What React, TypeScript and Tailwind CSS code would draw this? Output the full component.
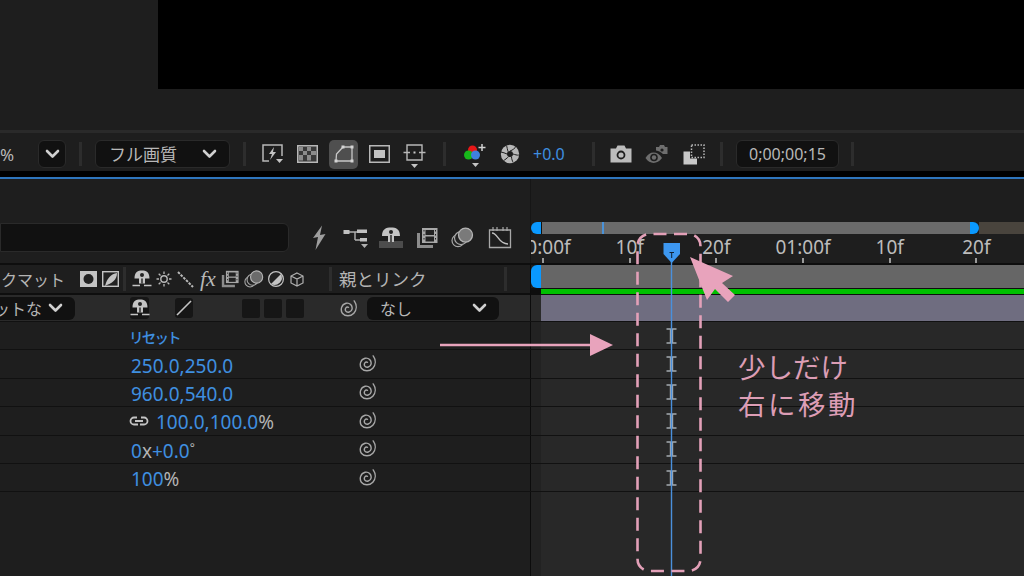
import React from "react";

const FONT = "font-['Noto_Sans','Noto_Sans_CJK_JP',sans-serif]";
const JP = "font-['Noto_Sans_CJK_JP',sans-serif]";

function Chevron({ className = "" }: { className?: string }) {
  return (
    <svg width="15" height="10" viewBox="0 0 15 10" className={className}>
      <path d="M2 2 L7.5 7.5 L13 2" fill="none" stroke="#d0d0d0" strokeWidth="2.6" strokeLinecap="round" strokeLinejoin="round" />
    </svg>
  );
}

function Sep({ className = "" }: { className?: string }) {
  return <div className={`w-[3px] h-[24px] bg-[#2d2d2d] shrink-0 ${className}`} />;
}

function Spiral({ className = "" }: { className?: string }) {
  return (
    <svg width="19" height="19" viewBox="0 0 16 16" className={`shrink-0 ${className}`}>
      <path d="M12.8 1.6 C15.2 5 15 9.2 12.5 12 C10 14.8 5 14.8 2.8 12 C1 9 2 4.6 6 3.6 C9 3 11.5 5.5 11 8.5 C10.5 11 7 12 5.6 10 C4.7 8 6.2 6.2 8 7" fill="none" stroke="#a8a8a8" strokeWidth="1.2" strokeLinecap="round" />
    </svg>
  );
}

function Shy({ className = "" }: { className?: string }) {
  return (
    <svg width="20" height="18" viewBox="0 0 20 18" className={`shrink-0 ${className}`}>
      <path d="M2.5 8.5 C2.5 2 6 0.5 10 0.5 C14 0.5 17.5 2 17.5 8.5 L13 8.5 L13 13.5 L7 13.5 L7 8.5 Z" fill="#c4c4c4" />
      <circle cx="10" cy="5" r="2" fill="#222" />
      <path d="M10 8.5 V13.5" stroke="#222" strokeWidth="1.4" />
      <path d="M0.5 15.5 H8 M12 15.5 H19.5" stroke="#c4c4c4" strokeWidth="1.5" />
    </svg>
  );
}

function FastPreview() {
  return (
    <svg width="24" height="22" viewBox="0 0 24 22" className="shrink-0">
      <path d="M8 18 H2 V2 H21 V13" fill="none" stroke="#b8b8b8" strokeWidth="1.5" />
      <path d="M13 4 L8 11 H11 L9 17 L15 9 H12 Z" fill="#c4c4c4" />
      <path d="M15 16 H22 L18.5 20 Z" fill="#c4c4c4" />
    </svg>
  );
}
function Checker() {
  return (
    <svg width="21" height="18" viewBox="0 0 21 18" className="shrink-0">
      <rect x="0.75" y="0.75" width="19.5" height="16.5" fill="#3a3a3a" stroke="#b8b8b8" strokeWidth="1.5" />
      <path d="M2 2 H6 V6 H2 Z M10 2 H14 V6 H10 Z M6 6 H10 V10 H6 Z M14 6 H19 V10 H14 Z M2 10 H6 V15.5 H2 Z M10 10 H14 V15.5 H10 Z" fill="#8c8c8c" />
    </svg>
  );
}
function MaskPath() {
  return (
    <svg width="22" height="20" viewBox="0 0 22 20">
      <path d="M3 17 L3.5 10 L10 3 H19 V17 Z" fill="none" stroke="#c8c8c8" strokeWidth="1.3" />
      <path d="M1.5 15.5 h3 v3 h-3 Z M17.5 15.5 h3 v3 h-3 Z M17.5 1.5 h3 v3 h-3 Z M8.5 1.5 h3 v3 h-3 Z" fill="#d4d4d4" />
    </svg>
  );
}
function Region() {
  return (
    <svg width="21" height="18" viewBox="0 0 21 18" className="shrink-0">
      <rect x="0.75" y="0.75" width="19.5" height="16.5" fill="none" stroke="#b8b8b8" strokeWidth="1.5" />
      <rect x="5" y="5" width="11" height="8" fill="#c4c4c4" />
    </svg>
  );
}
function Target() {
  return (
    <svg width="23" height="26" viewBox="0 0 23 26" className="shrink-0">
      <path d="M4 1 H19 V16 H4 Z" fill="none" stroke="#b8b8b8" strokeWidth="1.4" />
      <path d="M0.5 8.5 H7 M16 8.5 H22.5" stroke="#b8b8b8" strokeWidth="1.4" />
      <rect x="10.5" y="7.5" width="2" height="2" fill="#c8c8c8" />
      <path d="M8 20 H15 L11.5 24 Z" fill="#c4c4c4" />
    </svg>
  );
}
function Rgb() {
  return (
    <svg width="24" height="26" viewBox="0 0 24 26" className="shrink-0">
      <circle cx="9.5" cy="7" r="4.5" fill="#e81818" />
      <circle cx="5.5" cy="12" r="4.5" fill="#17b81a" />
      <circle cx="12.5" cy="12" r="4.5" fill="#3f7fe0" />
      <path d="M19 1 V8 M15.5 4.5 H22.5" stroke="#d0d0d0" strokeWidth="1.5" />
      <path d="M9 20 H16 L12.5 24 Z" fill="#c4c4c4" />
    </svg>
  );
}
function Shutter() {
  return (
    <svg width="20" height="20" viewBox="0 0 20 20" className="shrink-0">
      <circle cx="10" cy="10" r="9.2" fill="#b8b8b8" />
      <circle cx="10" cy="10" r="3" fill="#1e1e1e" />
      <path d="M10 7 C13 6 15 4 16 2.5 M13 10 C15 10.5 17 11.5 18.8 11 M11.5 12.7 C11.5 15 12.5 17 13 18.5 M8.5 12.7 C7 14 5 16 3.5 16.5 M7 10 C5 9 3 8.5 1 8 M8 7.5 C7.5 6 7 3 6.5 1.5" fill="none" stroke="#1e1e1e" strokeWidth="1" />
    </svg>
  );
}
function Camera() {
  return (
    <svg width="22" height="18" viewBox="0 0 22 18" className="shrink-0">
      <path d="M0.5 3.5 H6 L7.5 0.5 H14.5 L16 3.5 H21.5 V17.5 H0.5 Z" fill="#bcbcbc" />
      <circle cx="11" cy="10" r="4.4" fill="#1e1e1e" />
      <circle cx="11" cy="10" r="2.6" fill="#bcbcbc" />
    </svg>
  );
}
function EyeCam() {
  return (
    <svg width="23" height="21" viewBox="0 0 23 21" className="shrink-0">
      <path d="M0.5 14 C4 7.5 12 6 17 14 C12 20.5 5 20.5 0.5 14 Z" fill="#6e6e6e" />
      <circle cx="9" cy="13.5" r="3.8" fill="#1e1e1e" />
      <circle cx="9" cy="13.5" r="2.2" fill="#6e6e6e" />
      <path d="M11 3 H14 L15 1 H19 L20 3 H22.5 V10 H18 C16 8 14 7 11 6.5 Z" fill="#6e6e6e" />
      <circle cx="17" cy="6" r="1.6" fill="#1e1e1e" />
    </svg>
  );
}
function Snapshot() {
  return (
    <svg width="22" height="21" viewBox="0 0 22 21" className="shrink-0">
      <rect x="8.5" y="1" width="12.5" height="12.5" fill="none" stroke="#b8b8b8" strokeWidth="1.5" strokeDasharray="1.5 1.5" />
      <path d="M0.5 7.5 H7 V14.5 H14 V20.5 H0.5 Z" fill="#c8c8c8" />
    </svg>
  );
}
function Bolt() {
  return (
    <svg width="16" height="26" viewBox="0 0 16 26" className="shrink-0">
      <path d="M11 0.5 L2 13 L7 12 L4.5 25 L14.5 9 L9 10 Z" fill="#9e9e9e" />
    </svg>
  );
}
function Flow() {
  return (
    <svg width="26" height="24" viewBox="0 0 26 24" className="shrink-0">
      <path d="M4 6 H12 M12 6 V14 M12 6 H19 M12 14 H19" stroke="#b0b0b0" strokeWidth="1.4" fill="none" />
      <rect x="0.5" y="4" width="6" height="4" fill="#c0c0c0" />
      <rect x="14" y="3.5" width="10" height="3.5" fill="#c0c0c0" />
      <rect x="17" y="12" width="7" height="3.5" fill="#c0c0c0" />
      <path d="M18 18 H25 L21.5 22 Z" fill="#b0b0b0" />
    </svg>
  );
}
function HeadShy() {
  return (
    <svg width="24" height="22" viewBox="0 0 24 22" className="shrink-0">
      <rect x="0" y="14" width="24" height="7" fill="#4c4c4c" />
      <path d="M3 9 C3 2 7 0.5 12 0.5 C17 0.5 21 2 21 9 L15 9 L15 15 L9 15 L9 9 Z" fill="#c4c4c4" />
      <circle cx="12" cy="5" r="2" fill="#222" />
      <path d="M12 8 V15" stroke="#222" strokeWidth="1.4" />
    </svg>
  );
}
function Film({ w = 22, h = 22 }: { w?: number; h?: number }) {
  return (
    <svg width={w} height={h} viewBox="0 0 22 22" className="shrink-0">
      <path d="M1 6 H4 V18 H17 V21 H1 Z" fill="#8c8c8c" />
      <rect x="6" y="1" width="15.5" height="15" fill="#a8a8a8" />
      <rect x="9.5" y="3" width="8.5" height="5" fill="#222" />
      <rect x="9.5" y="9.5" width="8.5" height="5" fill="#222" />
      <path d="M7.5 3 h1 v1.5 h-1 Z M7.5 7 h1 v1.5 h-1 Z M7.5 11 h1 v1.5 h-1 Z M19 3 h1 v1.5 h-1 Z M19 7 h1 v1.5 h-1 Z M19 11 h1 v1.5 h-1 Z" fill="#222" />
    </svg>
  );
}
function Blur({ w = 23, fillTop = "#7a7a7a" }: { w?: number; fillTop?: string }) {
  return (
    <svg width={w} height={w * 0.92} viewBox="0 0 23 21" className="shrink-0">
      <circle cx="7" cy="13.5" r="6" fill="#222" stroke="#a8a8a8" strokeWidth="1.2" />
      <circle cx="10" cy="11" r="6.5" fill="#222" stroke="#a8a8a8" strokeWidth="1.2" />
      <circle cx="14.5" cy="8" r="7" fill={fillTop} stroke="#b4b4b4" strokeWidth="1.3" />
    </svg>
  );
}
function Graph() {
  return (
    <svg width="24" height="24" viewBox="0 0 24 24" className="shrink-0">
      <path d="M1.5 4 H22.5 V21.5 H1.5 Z" fill="none" stroke="#a8a8a8" strokeWidth="1.3" />
      <path d="M4 7 C10 7 10 18 20 18" fill="none" stroke="#c0c0c0" strokeWidth="1.4" />
      <path d="M5 1 V5 M9 1 V5 M15 1 V5 M19 1 V5" stroke="#a8a8a8" strokeWidth="1.2" />
    </svg>
  );
}
function Ibeam() {
  return (
    <svg width="11" height="16" viewBox="0 0 11 16" className="shrink-0">
      <path d="M0.5 1 H10.5 M0.5 15 H10.5" stroke="#a4aab0" strokeWidth="1.7" />
      <rect x="3.8" y="1" width="3.4" height="14" fill="#a4aab0" />
    </svg>
  );
}

function Row({ children, iBeam = false }: { children?: React.ReactNode; iBeam?: boolean }) {
  return (
    <div className="flex h-[28.4px] shrink-0 border-b border-[#111111]">
      <div className="w-[530px] shrink-0 flex items-center relative">{children}</div>
      <div className="w-px bg-[#0c0c0c] shrink-0" />
      <div className="w-[10px] bg-[#222222] shrink-0" />
      <div className="flex-1 bg-[#282828] flex items-center pl-[125px]">{iBeam && <Ibeam />}</div>
    </div>
  );
}

function ValueRow({ children }: { children: React.ReactNode }) {
  return (
    <Row iBeam>
      <div className={`w-[358px] pl-[131px] pt-[3px] shrink-0 text-[19px] leading-[24px] text-[#3f8fe0] flex items-center whitespace-nowrap ${FONT}`}>{children}</div>
      <Spiral className="mb-[1px]" />
    </Row>
  );
}

export default function App() {
  return (
    <div className={`relative w-[1024px] h-[576px] overflow-hidden bg-[#1e1e1e] flex flex-col ${FONT}`}>
      {/* viewer */}
      <div className="h-[130px] shrink-0">
        <div className="ml-[158px] h-[89px] bg-black" />
      </div>
      <div className="h-[3px] bg-[#2a2a2a] shrink-0" />
      {/* toolbar */}
      <div className="h-[38px] shrink-0 flex items-center whitespace-nowrap text-[#b8b8b8] pt-[4px]">
        <span className="w-[38px] shrink-0 text-[17px] leading-none">%</span>
        <div className="w-[28px] h-[28px] bg-[#111111] border border-[#2a2a2a] rounded-[6px] flex items-center justify-center shrink-0"><Chevron /></div>
        <Sep className="ml-[13px]" />
        <div className={`ml-[13px] w-[135px] h-[28px] bg-[#111111] border border-[#2a2a2a] rounded-[6px] flex items-center justify-between pl-[13px] pr-[12px] shrink-0 text-[17px] ${JP}`}>
          <span>フル画質</span>
          <Chevron />
        </div>
        <Sep className="ml-[13px]" />
        <div className="ml-[15px]"><FastPreview /></div>
        <div className="ml-[12px]"><Checker /></div>
        <div className="ml-[11px] w-[29px] h-[29px] rounded-[5px] bg-[#4f4f4f] flex items-center justify-center shrink-0"><MaskPath /></div>
        <div className="ml-[11px]"><Region /></div>
        <div className="ml-[13px] pt-[5px]"><Target /></div>
        <Sep className="ml-[17px]" />
        <div className="ml-[17px] pt-[4px]"><Rgb /></div>
        <div className="ml-[13px]"><Shutter /></div>
        <span className="ml-[13px] text-[16px] text-[#3f8fe0] w-[32px] shrink-0">+0.0</span>
        <Sep className="ml-[27px]" />
        <div className="ml-[15px]"><Camera /></div>
        <div className="ml-[13px]"><EyeCam /></div>
        <div className="ml-[15px]"><Snapshot /></div>
        <Sep className="ml-[15px]" />
        <div className="ml-[13px] w-[103px] h-[28px] bg-[#111111] border border-[#2a2a2a] rounded-[6px] flex items-center justify-center text-[16px] shrink-0">0;00;00;15</div>
        <Sep className="ml-[12px]" />
      </div>
      <div className="h-[6px] bg-black shrink-0" />
      <div className="h-[2px] bg-[#2f76bd] shrink-0" />

      {/* panel header + ruler */}
      <div className="flex h-[86px] shrink-0 border-b-2 border-[#0e0e0e]">
        <div className="w-[530px] shrink-0 flex items-start pt-[44px]">
          <div className="w-[289px] h-[29px] bg-[#111111] border border-[#2a2a2a] rounded-r-[6px] shrink-0" />
          <div className="flex items-center ml-[22px] h-[29px]">
            <Bolt />
            <div className="ml-[16px]"><Flow /></div>
            <div className="ml-[10px]"><HeadShy /></div>
            <div className="ml-[13px]"><Film /></div>
            <div className="ml-[13px]"><Blur /></div>
            <div className="ml-[14px]"><Graph /></div>
          </div>
        </div>
        <div className="w-px bg-[#161616] shrink-0" />
        <div className="flex-1 min-w-0 overflow-hidden pt-[43px] relative">
          <div className="flex h-[12px]">
            <div className="w-[10px] bg-[#0a99ff] rounded-l-[6px] shrink-0" />
            <div className="w-[429px] bg-[#6b6b6b] relative shrink-0 border-l border-[#111111]">
              <div className="absolute left-[60px] top-0 bottom-0 w-[2px] bg-[#4a92d8]" />
            </div>
            <div className="w-[9px] bg-[#0a99ff] rounded-r-[6px] shrink-0" />
            <div className="flex-1 bg-[#49443d]" />
          </div>
          <div className="flex ml-[-31.3px] h-[27px] mt-[2px]">
            {["00:00f", "10f", "20f", "01:00f", "10f", "20f"].map((t, i) => (
              <div key={i} className="w-[86.67px] shrink-0 flex flex-col items-center">
                <span className="text-[19px] leading-[22px] text-[#bcbcbc] whitespace-nowrap">{t}</span>
                <div className={`w-[2px] bg-[#9a9a9a] mt-auto ${i === 0 || i === 3 ? "h-[8px]" : "h-[6px]"}`} />
              </div>
            ))}
          </div>
        </div>
      </div>

      {/* column header */}
      <div className="flex h-[30px] shrink-0">
        <div className="w-[530px] shrink-0 flex items-center whitespace-nowrap relative border-b-2 border-[#0e0e0e]">
          <div className="w-[65px] shrink-0 overflow-hidden flex justify-end">
            <span className={`text-[16px] text-[#b4b4b4] ${JP}`}>クマット</span>
          </div>
          <svg width="17" height="16" viewBox="0 0 17 16" className="ml-[15px] shrink-0"><rect width="17" height="16" fill="#c4c4c4" /><circle cx="8.5" cy="8" r="5" fill="#222" /></svg>
          <svg width="17" height="16" viewBox="0 0 17 16" className="ml-[5px] shrink-0"><rect x="0.7" y="0.7" width="15.6" height="14.6" fill="#222" stroke="#c4c4c4" strokeWidth="1.4" /><path d="M3 15 C5 7 9 3 15 2 C15 9 10 12 3 15 Z" fill="#c4c4c4" /></svg>
          <Sep className="ml-[4px] h-[16px]" />
          <div className="ml-[6px]"><Shy /></div>
          <svg width="16" height="16" viewBox="0 0 16 16" className="ml-[4px] shrink-0"><circle cx="8" cy="8" r="3.2" fill="none" stroke="#b8b8b8" strokeWidth="1.4" /><path d="M8 0.5 V3 M8 13 V15.5 M0.5 8 H3 M13 8 H15.5 M2.7 2.7 L4.5 4.5 M11.5 11.5 L13.3 13.3 M2.7 13.3 L4.5 11.5 M11.5 4.5 L13.3 2.7" stroke="#b8b8b8" strokeWidth="1.3" /></svg>
          <svg width="17" height="17" viewBox="0 0 17 17" className="ml-[5px] shrink-0"><path d="M1 1 L16 16" stroke="#b8b8b8" strokeWidth="2" strokeDasharray="2.6 1.2" /></svg>
          <span className="ml-[6px] w-[18px] text-[22px] italic leading-none font-['Liberation_Serif',serif] text-[#b8b8b8] shrink-0">fx</span>
          <div className="ml-[3px]"><Film w={18} h={18} /></div>
          <div className="ml-[5px]"><Blur w={20} fillTop="#6b6b6b" /></div>
          <svg width="16" height="16" viewBox="0 0 16 16" className="ml-[4px] shrink-0"><circle cx="8" cy="8" r="7.4" fill="#222" stroke="#c4c4c4" strokeWidth="1.2" /><path d="M3 13 A7.4 7.4 0 0 0 13 3 Z" fill="#c4c4c4" /></svg>
          <svg width="14" height="15" viewBox="0 0 14 15" className="ml-[6px] shrink-0"><path d="M7 1 L13 4 V11 L7 14 L1 11 V4 Z M1 4 L7 7 L13 4 M7 7 V14" fill="none" stroke="#b0b0b0" strokeWidth="1.2" /></svg>
          <Sep className="ml-[25px] h-[16px]" />
          <span className={`ml-[7px] w-[90px] text-[17.5px] text-[#b4b4b4] shrink-0 ${JP}`}>親とリンク</span>
          <Sep className="ml-[75px] h-[16px]" />
        </div>
        <div className="w-px bg-[#0c0c0c] shrink-0" />
        <div className="flex-1 min-w-0 flex flex-col">
          <div className="h-[23px] flex shrink-0">
            <div className="w-[10px] bg-[#0a99ff] rounded-l-[6px] shrink-0" />
            <div className="flex-1 bg-[#666666]" />
          </div>
          <div className="h-[7px] bg-[#0e0e0e] flex items-center shrink-0">
            <div className="h-[5px] ml-[10px] flex-1 bg-[#00c000]" />
          </div>
        </div>
      </div>

      {/* layer row */}
      <div className="flex h-[27px] shrink-0 border-b border-[#111111]">
        <div className="w-[530px] shrink-0 flex items-center bg-[#2a2a2a] whitespace-nowrap">
          <div className={`w-[75px] h-[23px] bg-[#111111] rounded-r-[6px] flex items-center justify-end pr-[12px] text-[16px] text-[#b4b4b4] overflow-hidden shrink-0 ${JP}`}>
            <span className="mr-[6px]">ットな</span>
            <Chevron className="shrink-0" />
          </div>
          <div className="ml-[55px] w-[19px] h-[22px] bg-[#161616] rounded-[3px] flex items-center justify-center shrink-0"><Shy /></div>
          <div className="ml-[26px] w-[18px] h-[20px] bg-[#161616] rounded-[3px] flex items-center justify-center shrink-0">
            <svg width="16" height="16" viewBox="0 0 16 16"><path d="M1 15 L15 1" stroke="#c4c4c4" strokeWidth="1.6" /></svg>
          </div>
          <div className="ml-[49px] flex gap-[4px] shrink-0">
            <div className="w-[18px] h-[19px] bg-[#161616] rounded-[2px]" />
            <div className="w-[18px] h-[19px] bg-[#161616] rounded-[2px]" />
            <div className="w-[18px] h-[19px] bg-[#161616] rounded-[2px]" />
          </div>
          <Spiral className="ml-[35px]" />
          <div className={`ml-[9px] w-[132px] h-[23px] bg-[#111111] rounded-[6px] flex items-center justify-between pl-[13px] pr-[12px] text-[16px] text-[#b8b8b8] shrink-0 ${JP}`}>
            <span>なし</span>
            <Chevron />
          </div>
        </div>
        <div className="w-px bg-[#0c0c0c] shrink-0" />
        <div className="w-[10px] bg-[#2a2a2a] shrink-0" />
        <div className="flex-1 bg-[#6f6d80]" />
      </div>

      <Row iBeam>
        <span className={`pl-[129px] pt-[2px] text-[14.5px] font-medium tracking-[-1.8px] text-[#3f8fe0] ${JP}`}>リセット</span>
      </Row>
      <ValueRow>250.0,250.0</ValueRow>
      <ValueRow>960.0,540.0</ValueRow>
      <ValueRow>
        <svg width="20" height="12" viewBox="0 0 20 12" className="mr-[7px] ml-[-2px] mb-[3px] shrink-0">
          <path d="M8 2.5 H5 A3.5 3.5 0 0 0 5 9.5 H9 M12 2.5 H15 A3.5 3.5 0 0 1 15 9.5 H11 M6 6 H14" fill="none" stroke="#c4c4c4" strokeWidth="1.8" />
        </svg>
        100.0,100.0<span className="text-[#b4b4b4]">%</span>
      </ValueRow>
      <ValueRow>
        0<span className="text-[#b4b4b4]">x</span>+0.0<span className="text-[#b4b4b4] text-[12px] mb-[6px]">°</span>
      </ValueRow>
      <ValueRow>
        100<span className="text-[#b4b4b4]">%</span>
      </ValueRow>
      <div className="flex flex-1">
        <div className="w-[530px] shrink-0" />
        <div className="w-px bg-[#0c0c0c] shrink-0" />
        <div className="w-[10px] bg-[#222222] shrink-0" />
        <div className="flex-1 bg-[#282828]" />
      </div>

      {/* annotation overlay */}
      <svg width="1024" height="576" viewBox="0 0 1024 576" className="absolute left-0 top-0 pointer-events-none">
        <path d="M671.5 258 V576" stroke="#4a90dc" strokeWidth="1.4" />
        <path d="M663.5 243 H680 V254 L671.7 263 L663.5 254 Z" fill="#3d97f0" />
        <path d="M669.5 252.5 H674 M671.7 252.5 V258" stroke="#123" strokeWidth="1" />
        <rect x="637.5" y="234" width="63" height="337" rx="12" fill="none" stroke="#e3a0b8" strokeWidth="2.6" strokeDasharray="13 7.5" strokeDashoffset="-4" />
        <path d="M440 345 H592" stroke="#e8a3bc" strokeWidth="2.6" />
        <path d="M590 334 L613 345 L590 356 Z" fill="#e8a3bc" />
        <path d="M690 257 L733 276 L722 283 L735 295 L728 302 L715 289 L707 300 Z" fill="#e8a3bc" />
      </svg>
      <div className={`absolute left-[738px] top-[348px] text-[27.5px] leading-[37px] text-[#dc9db5] whitespace-nowrap ${JP}`}>
        <div>少しだけ</div>
        <div className="tracking-[2.5px]">右に移動</div>
      </div>
    </div>
  );
}
